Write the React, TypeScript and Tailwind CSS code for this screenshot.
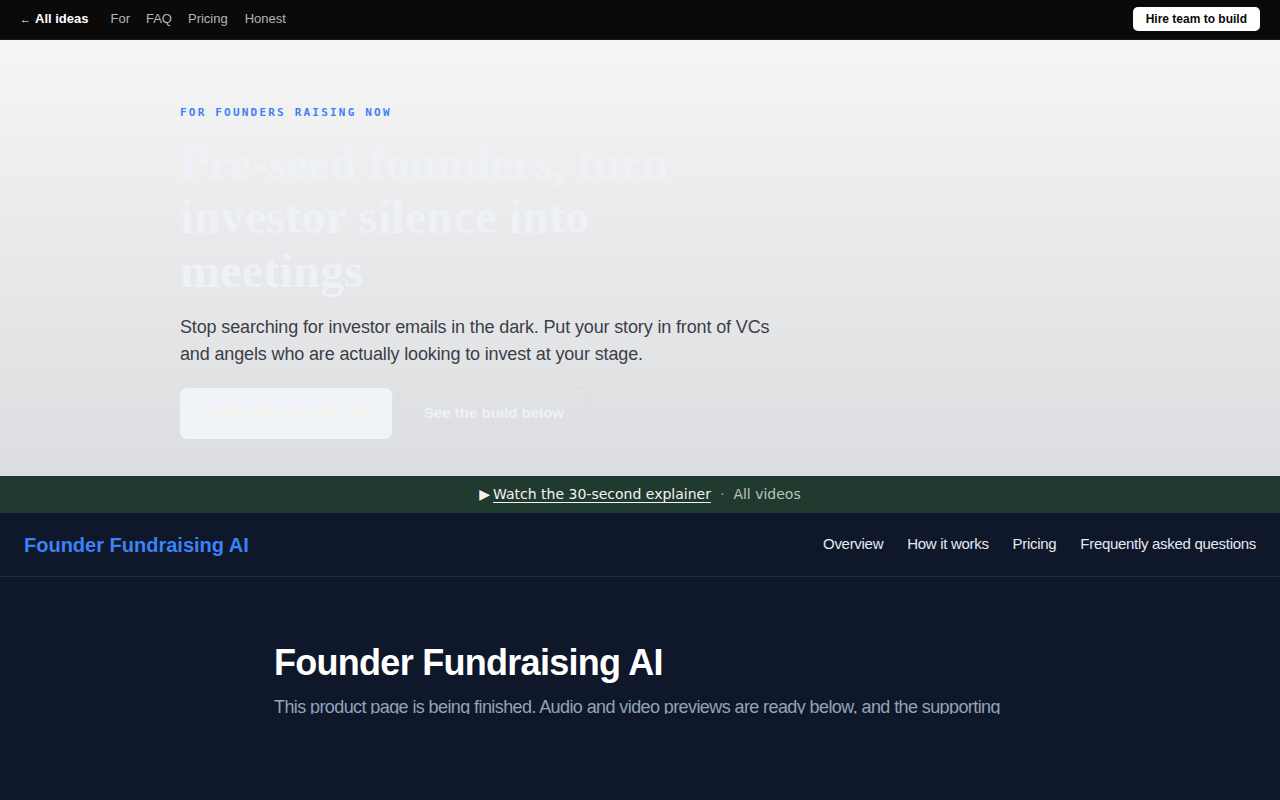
import React from "react";

export default function App() {
  const sans = { fontFamily: '"Liberation Sans", Arial, sans-serif' };
  return (
    <div className="min-h-[800px] bg-[#0f172a]" style={sans}>
      {/* Top bar */}
      <div className="h-10 bg-[#0a0a0a] flex items-center justify-between px-5 border-b border-[#1a1a1a]">
        <div className="flex items-center text-[13px] -mt-[2px]">
          <span className="text-white font-bold">
            <span className="text-[11px] mr-1">←</span>All ideas
          </span>
          <span className="text-[#b5b5b5] ml-[22px]">For</span>
          <span className="text-[#b5b5b5] ml-[16px]">FAQ</span>
          <span className="text-[#b5b5b5] ml-[16px]">Pricing</span>
          <span className="text-[#b5b5b5] ml-[17px]">Honest</span>
        </div>
        <button className="bg-white text-[#0a0a0a] font-bold text-[12px] h-6 px-[13px] rounded-[5px] leading-6 -mt-[2px]">
          Hire team to build
        </button>
      </div>

      {/* Hero */}
      <section className="h-[436px] bg-gradient-to-b from-[#f5f5f5] to-[#dcdde0] pl-[180px] pt-[65px]">
        <div
          className="text-[11px] font-bold tracking-[0.2em] text-[#3b82f6] leading-4"
          style={{ fontFamily: '"DejaVu Sans Mono", monospace' }}
        >
          FOR FOUNDERS RAISING NOW
        </div>
        <h1
          className="mt-[15px] text-[48px] leading-[54px] font-bold tracking-[0.005em] text-[#eef2f7] max-w-[560px]"
          style={{ fontFamily: '"Liberation Serif", "Times New Roman", serif' }}
        >
          Pre-seed founders, turn investor silence into meetings
        </h1>
        <p className="mt-[16px] text-[18px] leading-[27px] tracking-[-0.14px] text-[#3a3f47] max-w-[600px]">
          Stop searching for investor emails in the dark. Put your story in front of VCs and angels who are actually looking to invest at your stage.
        </p>
        <div className="mt-[20px] flex gap-[6px]">
          <div className="w-[212px] h-[51px] rounded-[7px] bg-[#f0f3f8] flex items-center justify-center text-[15px] font-bold text-[#f7f4ea]">
            Unlock the dossier · $5
          </div>
          <div className="w-[192px] h-[51px] rounded-[7px] border border-[#dadcdf] flex items-center justify-center text-[15px] font-bold text-[#eef1f5]">
            See the build below
          </div>
        </div>
      </section>

      {/* Green bar */}
      <div
        className="h-[37px] bg-[#213a2f] flex items-center justify-center text-[14px]"
        style={{ fontFamily: '"DejaVu Sans", sans-serif' }}
      >
        <span className="text-[#f3f3f3] mr-[3px]">▶</span>
        <span className="text-[#f3f3f3] underline underline-offset-[3px]">Watch the 30-second explainer</span>
        <span className="text-[#8a9a90] mx-[9px]">·</span>
        <span className="text-[#b8c2bc]">All videos</span>
      </div>

      {/* Product nav */}
      <nav className="h-[64px] bg-[#0f172a] border-b border-[#1f2a3c] flex items-center justify-between px-6">
        <span className="text-[20px] font-bold text-[#3b82f6]">Founder Fundraising AI</span>
        <div className="flex gap-6 text-[15px] tracking-[-0.02em] text-[#e5e9f0]">
          <span>Overview</span>
          <span>How it works</span>
          <span>Pricing</span>
          <span>Frequently asked questions</span>
        </div>
      </nav>

      {/* Main */}
      <main className="bg-[#0f172a]">
        <div className="max-w-[736px] mx-auto pl-[2px] pr-[2px] pt-[64px]">
          <h2 className="text-[36px] leading-[44px] font-bold tracking-[-0.02em] text-white">Founder Fundraising AI</h2>
          <div className="mt-[8px] h-[21px] overflow-hidden">
            <p className="text-[18px] leading-[28px] tracking-[-0.033em] text-[#94a3b8]">
              This product page is being finished. Audio and video previews are ready below, and the supporting materials will follow shortly.
            </p>
          </div>
        </div>
      </main>
    </div>
  );
}
